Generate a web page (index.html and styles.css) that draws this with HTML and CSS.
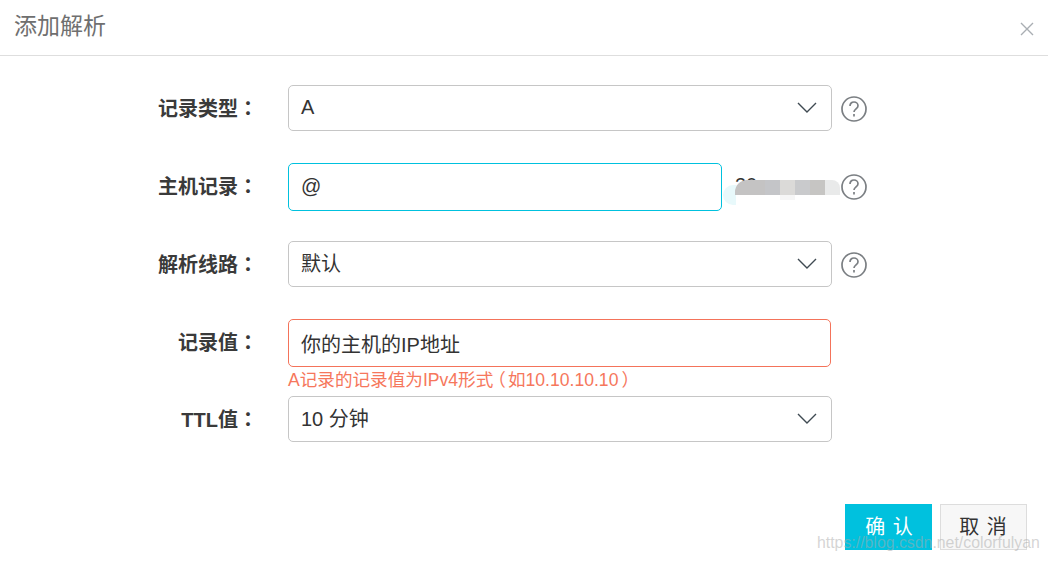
FILE: index.html
```html
<!DOCTYPE html>
<html lang="zh-CN">
<head>
  <meta charset="UTF-8" />
  <title>添加解析</title>
  <link rel="stylesheet" href="styles.css">
</head>
<body>
  <div class="dialog">
    <div class="dialog-head">
      <span class="dialog-title">添加解析</span>
      <svg class="close" width="14" height="14" viewBox="0 0 14 14"><path d="M1 1l12 12M13 1L1 13"/></svg>
    </div>

    <div class="form">
      <div class="row row-type">
        <label class="label low">记录类型<span class="punct" lang="zh-TW">：</span></label>
        <div class="field select">
          <span>A</span>
          <svg class="arrow" width="20" height="12" viewBox="0 0 20 12"><path d="M1 1l9 9 9-9"/></svg>
        </div>
        <svg class="help low-help" width="26" height="26" viewBox="0 0 26 26"><circle cx="13" cy="13" r="12"/><path d="M9 10c0-2.500 1.800-4 4-4s4 1.500 4 3.700c0 3-4 3.200-4 6.300"/><path d="M13 18v2.500"/></svg>
      </div>

      <div class="row row-host">
        <label class="label">主机记录<span class="punct" lang="zh-TW">：</span></label>
        <div class="field input focus">@</div>
        <div class="domain">
          <span class="domain-text">20</span>
          <div class="mosaic">
            <i class="m-glow"></i>
            <i class="m1"></i><i class="m2"></i><i class="m3"></i><i class="m4"></i><i class="m5"></i><i class="m6"></i>
          </div>
        </div>
        <svg class="help" width="26" height="26" viewBox="0 0 26 26"><circle cx="13" cy="13" r="12"/><path d="M9 10c0-2.500 1.800-4 4-4s4 1.500 4 3.700c0 3-4 3.200-4 6.300"/><path d="M13 18v2.500"/></svg>
      </div>

      <div class="row row-line">
        <label class="label low">解析线路<span class="punct" lang="zh-TW">：</span></label>
        <div class="field select raised">
          <span>默认</span>
          <svg class="arrow" width="20" height="12" viewBox="0 0 20 12"><path d="M1 1l9 9 9-9"/></svg>
        </div>
        <svg class="help low-help" width="26" height="26" viewBox="0 0 26 26"><circle cx="13" cy="13" r="12"/><path d="M9 10c0-2.500 1.800-4 4-4s4 1.500 4 3.700c0 3-4 3.200-4 6.300"/><path d="M13 18v2.500"/></svg>
      </div>

      <div class="row row-value">
        <label class="label">记录值<span class="punct" lang="zh-TW">：</span></label>
        <div class="field input error">你的主机的IP地址</div>
      </div>
      <div class="error-msg">A记录的记录值为IPv4形式<span class="paren-open">（</span>如10.10.10.10<span class="paren-close">）</span></div>

      <div class="row row-ttl">
        <label class="label low">TTL值<span class="punct" lang="zh-TW">：</span></label>
        <div class="field select raised">
          <span>10 分钟</span>
          <svg class="arrow" width="20" height="12" viewBox="0 0 20 12"><path d="M1 1l9 9 9-9"/></svg>
        </div>
      </div>
    </div>

    <div class="actions">
      <button class="btn btn-primary">确 认</button>
      <button class="btn btn-cancel">取 消</button>
    </div>
  </div>

  <div class="watermark">https://blog.csdn.net/colorfulyan</div>
</body>
</html>
```

FILE: styles.css
```css
* {
  box-sizing: border-box;
}
body {
  margin: 0;
  background: #fff;
  color: #333;
  font-family: "Liberation Sans", "Noto Sans CJK SC", sans-serif;
  overflow: hidden;
}
.dialog {
  position: relative;
  width: 1048px;
  height: 562px;
}
/* head */
.dialog-head {
  display: flex;
  justify-content: space-between;
  align-items: center;
  height: 56px;
  padding: 0 14px;
  border-bottom: 1px solid #dedede;
}
.dialog-title {
  margin-top: -8px;
  font-size: 23px;
  color: #6f6f6f;
}
.close {
  margin-top: 3px;
  flex: none;
}
.close path {
  fill: none;
  stroke: #a9aeb3;
  stroke-width: 1.4;
}
/* form */
.form {
  padding-top: 29px;
}
.row {
  display: flex;
  align-items: center;
}
.row-host {
  margin-top: 32px;
}
.row-line {
  margin-top: 30px;
}
.row-value {
  margin-top: 32px;
}
.row-ttl {
  margin-top: 5px;
}
.label {
  width: 258px;
  height: 30px;
  line-height: 30px;
  margin-right: 30px;
  margin-bottom: 1px;
  text-align: right;
  font-size: 20px;
  font-weight: bold;
  color: #3a3a3a;
  white-space: nowrap;
}
.label.low {
  margin-bottom: -1px;
}
/* full-width punctuation set centred in its box */
.punct {
  font-family: "Noto Sans CJK TC", sans-serif;
  line-height: 1;
}
.field {
  display: flex;
  align-items: center;
  border: 1px solid #c6c6c6;
  border-radius: 5px;
  font-size: 20px;
  color: #333;
  padding: 0 12px 2px;
}
.select {
  justify-content: space-between;
  width: 544px;
  height: 46px;
}
.raised {
  padding-bottom: 4px;
}
.arrow {
  margin: 2px 2px 0 0;
  flex: none;
}
.raised .arrow {
  margin-top: 4px;
}
.arrow path {
  fill: none;
  stroke: #3f4a52;
  stroke-width: 1.4;
}
.input {
  height: 48px;
}
.focus {
  width: 434px;
  border-color: #00c1de;
}
.error {
  width: 543px;
  padding-bottom: 0;
  border-color: #f4735a;
}
.help {
  margin-left: 9px;
  flex: none;
}
.low-help {
  margin-top: 2px;
}
.help circle,
.help path {
  fill: none;
  stroke: #7b7f83;
  stroke-width: 1.7;
}
/* blurred domain next to host input */
.domain {
  position: relative;
  width: 119px;
  height: 48px;
  margin-right: -9px;
  font-size: 20px;
  padding: 11px 0 0 13px;
}
.domain-text {
  color: #333;
}
.mosaic i {
  position: absolute;
  display: block;
  top: 17px;
  height: 15px;
  width: 15px;
}
.mosaic .m-glow {
  left: 1px;
  top: 22px;
  width: 13px;
  height: 20px;
  background: #e8f9fb;
  border-radius: 10px 0 0 10px;
}
.mosaic .m1 {
  left: 13px;
  width: 30px;
  background: #c4c3c3;
  border-top-left-radius: 12px;
}
.mosaic .m2 {
  left: 43px;
  background: #c4c5c8;
}
.mosaic .m3 {
  left: 58px;
  background: #dbdad8;
  box-shadow: 0 5px 0 #f6f6f6;
}
.mosaic .m4 {
  left: 73px;
  background: #c9cacc;
}
.mosaic .m5 {
  left: 88px;
  background: #c6c5c3;
}
.mosaic .m6 {
  left: 103px;
  background: #e9eaea;
  border-top-right-radius: 8px;
}
.error-msg {
  margin: 2px 0 0 288px;
  height: 22px;
  line-height: 22px;
  font-size: 17.6px;
  color: #f6775c;
  white-space: nowrap;
}
/* the CJK font hugs brackets to the text, these sit apart from it */
.paren-open {
  display: inline-block;
  margin-right: -3px;
  transform: translateX(-5px);
}
.paren-close {
  display: inline-block;
  transform: translateX(3px);
}
/* buttons */
.actions {
  display: flex;
  justify-content: flex-end;
  gap: 8px;
  margin-top: 62px;
  padding-right: 21px;
}
.btn {
  width: 87px;
  height: 46px;
  padding: 0 0 3px;
  border: 1px solid transparent;
  font-family: inherit;
  font-size: 20px;
  letter-spacing: 1px;
}
.btn-primary {
  padding-left: 2px;
  background: #00c1de;
  color: #fff;
}
.btn-cancel {
  background: #f7f7f7;
  border-color: #dddddd;
  color: #333;
}
.watermark {
  position: absolute;
  left: 817px;
  top: 534px;
  font-size: 15.85px;
  color: rgba(170, 170, 170, 0.5);
  white-space: nowrap;
}
```
